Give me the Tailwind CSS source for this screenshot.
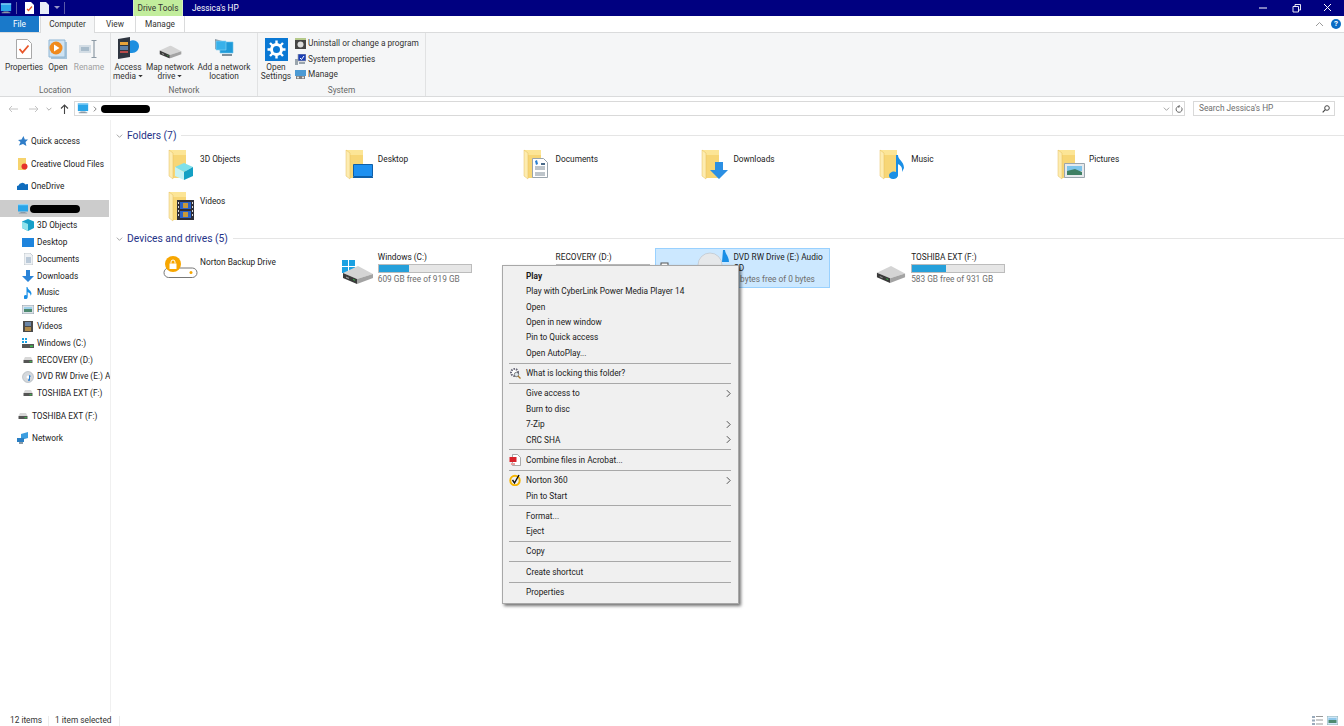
<!DOCTYPE html>
<html lang="en">
<head>
<meta charset="UTF-8">
<title>Jessica's HP</title>
<script src="https://cdn.jsdelivr.net/npm/@tailwindcss/browser@4"></script>
</head>
<body class="font-['Roboto',sans-serif] text-[8.300px] text-[#1a1a1a] bg-white">

<svg class="hidden" xmlns="http://www.w3.org/2000/svg">
  <symbol id="folder" viewBox="0 0 32 32">
    <path d="M1 1h17v25H1z" fill="#fce596"/>
    <path d="M5 6h13v23H5z" fill="#f7d676"/>
    <path d="M1 1l4 3v26l-4-3z" fill="#fdecb0" stroke="#e5bf5c" stroke-width=".5"/>
  </symbol>
  <symbol id="pc" viewBox="0 0 14 12">
    <path d="M1 0h12v9H1z" fill="#2aa5e8"/>
    <path d="M1 0h12v1.500H1z" fill="#8fd3f7"/>
    <path d="M4 9.500h6v1H4zM2 10.500h10v1H2z" fill="#8a9aa6"/>
  </symbol>
  <symbol id="hdd" viewBox="0 0 12 8">
    <path d="M2 0h8l2 4H0z" fill="#d8d8d8"/>
    <path d="M0 4h12v4H0z" fill="#555"/>
    <path d="M8 5.500h3v1.500H8z" fill="#3fbf4f"/>
  </symbol>
  <symbol id="bigdrive" viewBox="0 0 32 18">
    <path d="M1 7L16 0l15 8-16 5z" fill="#d4d4d4"/>
    <path d="M1 7l14 6v5L1 12z" fill="#3a3a3a"/>
    <path d="M15 13l16-5v4l-16 6z" fill="#a3a3a3"/>
    <path d="M4 10.500l3 1.300v1.200l-3-1.300z" fill="#9a9a9a"/>
    <path d="M11 13l2 .8v1l-2-.8z" fill="#39b54a"/>
  </symbol>
  <symbol id="chev" viewBox="0 0 6 10">
    <path d="M1 1l4 4-4 4" fill="none" stroke="#444" stroke-width="1.100"/>
  </symbol>
  <symbol id="down" viewBox="0 0 10 6">
    <path d="M1 1l4 4 4-4" fill="none" stroke="#777" stroke-width="1"/>
  </symbol>
  <symbol id="caret" viewBox="0 0 6 4">
    <path d="M0 0h6L3 3z" fill="#333"/>
  </symbol>
</svg>

<div class="flex flex-col h-[726px] w-[1344px] overflow-hidden">

  <!-- title bar -->
  <div class="flex items-center h-4 shrink-0 bg-[#000080] text-white">
    <svg class="w-3 h-[11px] ml-0 shrink-0"><use href="#pc"/></svg>
    <div class="w-px h-3 bg-[#5a5aa8] ml-1"></div>
    <svg class="w-[9px] h-3 ml-2 shrink-0" viewBox="0 0 9 12"><path d="M0 0h6l3 3v9H0z" fill="#fff"/><path d="M2 7l1.500 1.500L7 4.500" fill="none" stroke="#e8562a" stroke-width="1.200"/></svg>
    <svg class="w-[9px] h-3 ml-[6px] shrink-0" viewBox="0 0 9 12"><path d="M0 0h6l3 3v9H0z" fill="#e8eef8"/></svg>
    <svg class="w-[6px] h-1 ml-[5px]" viewBox="0 0 6 4"><path d="M0 0h6L3 3z" fill="#9a9ac8"/></svg>
    <div class="w-px h-3 bg-[#5a5aa8] ml-1"></div>
    <div class="flex items-center justify-center w-[50px] h-4 ml-[68px] bg-[#c2ed9c] text-[#333] border-x border-[#d8f0c0]">Drive Tools</div>
    <span class="ml-[9px]">Jessica's HP</span>
    <div class="flex items-center ml-auto">
      <svg class="w-[34px] h-4" viewBox="0 0 34 16"><path d="M12 8h8" stroke="#fff"/></svg>
      <svg class="w-[30px] h-4" viewBox="0 0 30 16"><path d="M12 6.500h5.500V12H12zM14 6.500V4.500h5.500V10h-2" fill="none" stroke="#fff" stroke-width=".9"/></svg>
      <svg class="w-[33px] h-4" viewBox="0 0 33 16"><path d="M13 4l7 7M20 4l-7 7" stroke="#fff"/></svg>
    </div>
  </div>

  <!-- tabs -->
  <div class="flex h-[17px] shrink-0 border-b border-[#dadbdc] text-[#333]">
    <div class="flex items-center justify-center w-[39px] h-4 bg-[#1979ca] text-white">File</div>
    <div class="flex items-center justify-center w-[55px] h-[17px] ml-px bg-[#f5f6f7] border-x border-[#dadbdc]">Computer</div>
    <div class="flex items-center justify-center w-10 h-4">View</div>
    <div class="flex items-center justify-center w-[50px] h-4 border-x border-[#dadbdc]">Manage</div>
    <svg class="w-[9px] h-[6px] mt-[5px] ml-auto" viewBox="0 0 9 6"><path d="M1 5l3.500-3.500L8 5" fill="none" stroke="#9a9a9a"/></svg>
    <div class="flex items-center justify-center w-[10px] h-[10px] mt-[3px] ml-[7px] mr-[3px] rounded-full bg-[#0a6cc4] text-white text-[8px] font-bold">?</div>
  </div>

  <!-- ribbon -->
  <div class="flex h-16 shrink-0 bg-[#f5f6f7] border-b border-[#dadbdc] text-[#333] whitespace-nowrap">
    <div class="flex flex-col w-[111px] border-r border-[#e1e2e3]">
      <div class="flex flex-1 pl-[5px] pt-[6px] leading-[9px] text-center">
        <div class="flex flex-col items-center w-[38px]">
          <svg class="w-4 h-5" viewBox="0 0 16 20"><path d="M.5.500h11l4 4v15H.5z" fill="#fff" stroke="#a8a8a8"/><path d="M3.500 10l3 3.500 6-7" fill="none" stroke="#e8562a" stroke-width="1.800"/></svg>
          <span class="mt-[4px]">Properties</span>
        </div>
        <div class="flex flex-col items-center w-[30px]">
          <svg class="w-5 h-5" viewBox="0 0 20 20"><path d="M3 3h16v17H3z" fill="#a7c4da"/><path d="M1 1h16v17H1z" fill="#cfe3f2" stroke="#8fb6d4"/><circle cx="8" cy="9" r="6.500" fill="#f08a1d"/><path d="M6 5.500v7l5.500-3.500z" fill="#fff"/></svg>
          <span class="mt-[4px]">Open</span>
        </div>
        <div class="flex flex-col items-center w-8 text-[#a0a0a0]">
          <svg class="w-5 h-5" viewBox="0 0 20 20"><path d="M0 6h12v8H0z" fill="#d3dde5"/><path d="M2 8h8v4H2z" fill="#a9bccb"/><path d="M15 2v16M12.500 1.500h5M12.500 18.500h5" stroke="#8d9aa5" stroke-width="1.200" fill="none"/></svg>
          <span class="mt-[4px]">Rename</span>
        </div>
      </div>
      <div class="flex items-center justify-center h-3 text-[#666]">Location</div>
    </div>

    <div class="flex flex-col w-[147px] border-r border-[#e1e2e3]">
      <div class="flex flex-1 pl-[3px] pt-[4px] leading-[9px] text-center">
        <div class="flex flex-col items-center w-7">
          <svg class="w-[23px] h-[22px]" viewBox="0 0 23 22"><path d="M1 2l12-2v20L1 22z" fill="#2f3540"/><path d="M3 5h8v3H3z" fill="#e8a33a"/><path d="M3 9h8v4H3z" fill="#5c7fa8"/><path d="M3 14h8v2H3z" fill="#b84a4a"/><path d="M13 4a6 6 0 0 1 9 5c0 4-3 7-7 7h-2z" fill="#1d8fe0"/></svg>
          <span class="mt-[4px]">Access<br>media <svg class="inline w-[5px] h-[3px] align-middle"><use href="#caret"/></svg></span>
        </div>
        <div class="flex flex-col items-center w-[50px] ml-[3px]">
          <svg class="w-[23px] h-[14px] mt-2" viewBox="0 0 32 18"><use href="#bigdrive" width="32" height="18"/></svg>
          <span class="mt-[4px]">Map network<br>drive <svg class="inline w-[5px] h-[3px] align-middle"><use href="#caret"/></svg></span>
        </div>
        <div class="flex flex-col items-center w-[54px] ml-[2px]">
          <svg class="w-5 h-[22px]" viewBox="0 0 20 22"><path d="M1 2l11 3v10L1 12z" fill="#8a9aa6"/><path d="M6 5h13v11H6z" fill="#1f9bd9" stroke="#6cc2ea" stroke-width=".6"/><path d="M2 4h10v9H2z" fill="#38b1ea" stroke="#8ed4f4" stroke-width=".6"/><path d="M8 17h10v2H8z" fill="#7f8f9a"/></svg>
          <span class="mt-[4px]">Add a network<br>location</span>
        </div>
      </div>
      <div class="flex items-center justify-center h-3 text-[#666]">Network</div>
    </div>

    <div class="flex flex-col w-[168px] border-r border-[#e1e2e3]">
      <div class="flex flex-1 pl-[4px] pt-[5px] leading-[9px]">
        <div class="flex flex-col items-center w-7 text-center">
          <svg class="w-[23px] h-[23px]" viewBox="0 0 23 23"><path d="M0 0h23v23H0z" fill="#0a78d4"/><circle cx="11.500" cy="11.500" r="5" fill="none" stroke="#fff" stroke-width="3"/><path d="M11.500 2.500v4M11.500 16.500v4M2.500 11.500h4M16.500 11.500h4M5 5l3 3M15 15l3 3M18 5l-3 3M8 15l-3 3" stroke="#fff" stroke-width="2.400"/></svg>
          <span class="mt-[2px]">Open<br>Settings</span>
        </div>
        <div class="flex flex-col ml-[5px] -mt-[2px]">
          <div class="flex items-center h-[15.500px] gap-[2px]">
            <svg class="w-[11px] h-[11px]" viewBox="0 0 11 11"><path d="M0 1h11v10H0z" fill="#444"/><path d="M0 0h11v2H0z" fill="#b5c98a"/><circle cx="5.500" cy="6.500" r="3" fill="#ddd"/></svg>
            <span>Uninstall or change a program</span>
          </div>
          <div class="flex items-center h-[15.500px] gap-[2px]">
            <svg class="w-[11px] h-[11px]" viewBox="0 0 11 11"><path d="M3 0h8v7H3z" fill="#1c3fb5" stroke="#aaa" stroke-width=".7"/><path d="M5 4l1.500 1.500L9 2" fill="none" stroke="#fff"/><path d="M0 5h3v6H0zM4 8h6v2H4z" fill="#9aa5ad"/></svg>
            <span>System properties</span>
          </div>
          <div class="flex items-center h-[15.500px] gap-[2px]">
            <svg class="w-[11px] h-[11px]" viewBox="0 0 11 11"><path d="M0 1h11v6H0z" fill="#4b9ad4"/><path d="M1 7h9v3H1z" fill="#7d7d7d"/><circle cx="3" cy="8.500" r="1" fill="#eee"/><circle cx="8" cy="8.500" r="1" fill="#eee"/></svg>
            <span>Manage</span>
          </div>
        </div>
      </div>
      <div class="flex items-center justify-center h-3 text-[#666]">System</div>
    </div>
  </div>

  <!-- address bar -->
  <div class="flex items-center h-[23px] shrink-0">
    <svg class="w-[10px] h-2 ml-2" viewBox="0 0 10 8"><path d="M10 4H1M4 1L1 4l3 3" fill="none" stroke="#c4c4c4"/></svg>
    <svg class="w-[10px] h-2 ml-[11px]" viewBox="0 0 10 8"><path d="M0 4h9M6 1l3 3-3 3" fill="none" stroke="#c4c4c4"/></svg>
    <svg class="w-[6px] h-1 ml-[7px]"><use href="#down"/></svg>
    <svg class="w-[9px] h-[10px] ml-[8px]" viewBox="0 0 9 10"><path d="M4.500 10V1M1 4.500L4.500 1 8 4.500" fill="none" stroke="#444" stroke-width="1.100"/></svg>
    <div class="flex items-center flex-1 h-[15px] ml-[5px] border border-[#d9d9d9]">
      <svg class="w-3 h-[11px] ml-[2px]"><use href="#pc"/></svg>
      <svg class="w-1 h-[6px] ml-[4px]"><use href="#chev"/></svg>
      <div class="w-[49px] h-2 ml-[4px] rounded-full bg-black"></div>
      <svg class="w-[7px] h-1 ml-auto mr-[2px]"><use href="#down"/></svg>
      <div class="flex items-center justify-center w-3 h-[13px] border-l border-[#d9d9d9]">
        <svg class="w-2 h-2" viewBox="0 0 8 8"><path d="M6.500 2.500a3 3 0 1 1-2.500-1.200M3.500 0l1.500 1.300L3.500 2.800" fill="none" stroke="#555" stroke-width=".9"/></svg>
      </div>
    </div>
    <div class="flex items-center w-[142px] h-[15px] ml-2 mr-[9px] pl-[5px] border border-[#d9d9d9] text-[#6d6d6d]">
      <span>Search Jessica's HP</span>
      <svg class="w-2 h-2 ml-auto mr-[4px]" viewBox="0 0 8 8"><circle cx="5" cy="3" r="2.300" fill="none" stroke="#444"/><path d="M3.300 4.700L.7 7.300" stroke="#444" stroke-width="1.200"/></svg>
    </div>
  </div>

  <!-- body -->
  <div class="flex flex-1 min-h-0">
    <aside class="w-[111px] shrink-0 border-r border-[#f0f0f0] pt-[13px] overflow-hidden whitespace-nowrap">
      <div class="flex items-center h-[16.800px] pl-[18px] gap-[3px]">
        <svg class="w-[10px] h-[10px] shrink-0" viewBox="0 0 10 10"><path d="M5.500 0l1.300 3.400L10 3.600 7.500 6l.9 4-3.400-2L1 9.500 2.500 6 0 4l3.500-.5z" fill="#2f7dc8"/></svg>
        <span>Quick access</span>
      </div>
      <div class="flex items-center h-[16.800px] mt-[5.600px] pl-[18px] gap-[3px]">
        <svg class="w-[10px] h-3 shrink-0" viewBox="0 0 10 12"><path d="M0 0h8v12H0z" fill="#f6d36d"/><circle cx="6.500" cy="8.500" r="3" fill="#e5322b"/></svg>
        <span>Creative Cloud Files</span>
      </div>
      <div class="flex items-center h-[16.800px] mt-[5.600px] pl-[17px] gap-[3px]">
        <svg class="w-[11px] h-2 shrink-0" viewBox="0 0 11 8"><path d="M0 8a2.500 2.500 0 0 1 1.500-4.500 4 4 0 0 1 7-1A3 3 0 0 1 11 8z" fill="#0f6cbd"/></svg>
        <span>OneDrive</span>
      </div>
      <div class="flex items-center h-[16.800px] mt-[5.600px] w-[109px] pl-[17px] bg-[#cccccc]">
        <svg class="w-3 h-[10px] shrink-0"><use href="#pc"/></svg>
        <div class="w-[50px] h-2 ml-[1px] rounded-full bg-black"></div>
      </div>
      <div class="flex items-center h-[16.800px] pl-[22px] gap-[3px]">
        <svg class="w-3 h-3 shrink-0" viewBox="0 0 12 12"><path d="M6 0l6 2.500V9l-6 3-6-3V2.500z" fill="#18a0c8"/><path d="M0 2.500L6 5v7L0 9z" fill="#8fe3ec"/></svg>
        <span>3D Objects</span>
      </div>
      <div class="flex items-center h-[16.800px] pl-[22px] gap-[3px]">
        <svg class="w-3 h-[9px] shrink-0" viewBox="0 0 12 9"><path d="M0 0h12v9H0z" fill="#1e84dd"/></svg>
        <span>Desktop</span>
      </div>
      <div class="flex items-center h-[16.800px] pl-[24px] gap-[4px]">
        <svg class="w-[9px] h-3 shrink-0" viewBox="0 0 9 12"><path d="M0 0h6l3 3v9H0z" fill="#eef1f4" stroke="#a9b2ba" stroke-width=".6"/><path d="M2 5h5M2 7h5M2 9h5" stroke="#6d8fb0" stroke-width=".8"/></svg>
        <span>Documents</span>
      </div>
      <div class="flex items-center h-[16.800px] pl-[22px] gap-[3px]">
        <svg class="w-3 h-3 shrink-0" viewBox="0 0 12 12"><path d="M4 0h4v6h4l-6 6-6-6h4z" fill="#2b84d8"/></svg>
        <span>Downloads</span>
      </div>
      <div class="flex items-center h-[16.800px] pl-[24px] gap-[5px]">
        <svg class="w-2 h-3 shrink-0" viewBox="0 0 8 12"><path d="M2.500 0h1c0 3 4 3 4 7l-1 2c.4-3-2-3.500-2.800-4v5a2 2 0 1 1-1.200-1.800z" fill="#1a8fe6"/></svg>
        <span>Music</span>
      </div>
      <div class="flex items-center h-[16.800px] pl-[22px] gap-[3px]">
        <svg class="w-3 h-[9px] shrink-0" viewBox="0 0 12 9"><path d="M0 0h12v9H0z" fill="#dbe2e8" stroke="#8c98a2" stroke-width=".8"/><path d="M2 2h8v2H2z" fill="#9ed0ea"/><path d="M2 4h8v3H2z" fill="#4d8a70"/></svg>
        <span>Pictures</span>
      </div>
      <div class="flex items-center h-[16.800px] pl-[23px] gap-[4px]">
        <svg class="w-[10px] h-[11px] shrink-0" viewBox="0 0 10 11"><path d="M0 0h10v11H0z" fill="#4a4a4a"/><path d="M2 1h6v4H2z" fill="#6a86a8"/><path d="M2 6h6v4H2z" fill="#b08a4a"/></svg>
        <span>Videos</span>
      </div>
      <div class="flex items-center h-[16.800px] pl-[22px] gap-[3px]">
        <svg class="w-3 h-[10px] shrink-0" viewBox="0 0 12 10"><path d="M0 0h2v2H0zM3 0h2v2H3zM0 3h2v2H0zM3 3h2v2H3z" fill="#1ba1e2"/><path d="M0 6h12v4H0z" fill="#555"/><path d="M8 7.500h3V9H8z" fill="#3fbf4f"/></svg>
        <span>Windows (C:)</span>
      </div>
      <div class="flex items-center h-[16.800px] pl-[23px] gap-[4px]">
        <svg class="w-[10px] h-[6px] shrink-0"><use href="#hdd"/></svg>
        <span>RECOVERY (D:)</span>
      </div>
      <div class="flex items-center h-[16.800px] pl-[22px] gap-[3px]">
        <svg class="w-3 h-3 shrink-0" viewBox="0 0 12 12"><circle cx="6" cy="6" r="5.500" fill="#d4d8dc" stroke="#9aa2a8" stroke-width=".5"/><circle cx="6" cy="6" r="1.500" fill="#fff"/><path d="M7 9V4l2 1-1 1v3a1 1 0 1 1-1-1z" fill="#2a7fd0"/></svg>
        <span>DVD RW Drive (E:) Audio CD</span>
      </div>
      <div class="flex items-center h-[16.800px] pl-[23px] gap-[4px]">
        <svg class="w-[10px] h-[6px] shrink-0"><use href="#hdd"/></svg>
        <span>TOSHIBA EXT (F:)</span>
      </div>
      <div class="flex items-center h-[16.800px] mt-[5.600px] pl-[18px] gap-[4px]">
        <svg class="w-[10px] h-[6px] shrink-0"><use href="#hdd"/></svg>
        <span>TOSHIBA EXT (F:)</span>
      </div>
      <div class="flex items-center h-[16.800px] mt-[5.600px] pl-[17px] gap-[3px]">
        <svg class="w-3 h-3 shrink-0" viewBox="0 0 12 12"><path d="M4 2l7-2v6l-7 2z" fill="#3c9ee0"/><path d="M0 6h7v4H0z" fill="#2a7fc4"/><path d="M2 10h4v2H2z" fill="#8a9aa6"/></svg>
        <span>Network</span>
      </div>
    </aside>

    <main class="relative flex-1 pt-[9px] pl-[5px]">
      <!-- Folders -->
      <div class="flex items-center h-[14px]">
        <svg class="w-[7px] h-1"><use href="#down"/></svg>
        <span class="ml-1 text-[10.300px] text-[#1e3287]">Folders (7)</span>
        <div class="flex-1 h-px ml-[5px] mb-[2px] bg-[#e5e5e5]"></div>
      </div>
      <div class="grid grid-cols-[repeat(6,177.800px)] auto-rows-[40px] gap-y-[2px] ml-[5.600px] mt-[5px]">
        <div class="flex h-10">
          <div class="w-[78.400px] shrink-0">
            <svg class="w-8 h-8 ml-[46px] mt-px" viewBox="0 0 32 32"><use href="#folder" width="32" height="32"/><path d="M7 18l9-4 9 4-9 5z" fill="#7fe0ea"/><path d="M7 18l9 5v8l-9-4z" fill="#c5f2f4"/><path d="M16 23l9-5v9l-9 4z" fill="#14a0c4"/></svg>
          </div>
          <span class="mt-[4.500px]">3D Objects</span>
        </div>
        <div class="flex h-10">
          <div class="w-[78.400px] shrink-0">
            <svg class="w-8 h-8 ml-[46px] mt-px" viewBox="0 0 32 32"><use href="#folder" width="32" height="32"/><path d="M8.500 15.500h19v12h-19z" fill="#1e90f0" stroke="#0f5fa8"/><path d="M8 28h20v1H8z" fill="#0f5fa8"/></svg>
          </div>
          <span class="mt-[4.500px]">Desktop</span>
        </div>
        <div class="flex h-10">
          <div class="w-[78.400px] shrink-0">
            <svg class="w-8 h-8 ml-[46px] mt-px" viewBox="0 0 32 32"><use href="#folder" width="32" height="32"/><path d="M9.500 9.500h11l4 4v15h-15z" fill="#fff" stroke="#9aa5ad"/><path d="M12 12l2-1 1 4-2 1z" fill="#2a7fd0"/><path d="M12 18h10M12 20h10M12 24h10M12 26h10" stroke="#7d8a95"/><path d="M18 14h4v2h-4z" fill="#4b6b8a"/></svg>
          </div>
          <span class="mt-[4.500px]">Documents</span>
        </div>
        <div class="flex h-10">
          <div class="w-[78.400px] shrink-0">
            <svg class="w-8 h-8 ml-[46px] mt-px" viewBox="0 0 32 32"><use href="#folder" width="32" height="32"/><path d="M14 13h8v8h5l-9 9-9-9h5z" fill="#2b8fe3"/></svg>
          </div>
          <span class="mt-[4.500px]">Downloads</span>
        </div>
        <div class="flex h-10">
          <div class="w-[78.400px] shrink-0">
            <svg class="w-8 h-8 ml-[46px] mt-px" viewBox="0 0 32 32"><use href="#folder" width="32" height="32"/><path d="M17 6h2c0 5 6 6 6 13l-2 4c.8-6-2.500-7-4-8v11c0 2.500-2.500 4-5 4s-4-1.500-4-3.500 2.500-4 5-4c.8 0 1.500.2 2 .5z" fill="#1a8fe6"/></svg>
          </div>
          <span class="mt-[4.500px]">Music</span>
        </div>
        <div class="flex h-10">
          <div class="w-[78.400px] shrink-0">
            <svg class="w-8 h-8 ml-[46px] mt-px" viewBox="0 0 32 32"><use href="#folder" width="32" height="32"/><path d="M7.500 14.500h20v14h-20z" fill="#e6e9ec" stroke="#9aa5ad"/><path d="M10 17h15v5H10z" fill="#7ec4ea"/><path d="M10 22l8-2 7 3v3H10z" fill="#3e7f63"/></svg>
          </div>
          <span class="mt-[4.500px]">Pictures</span>
        </div>
        <div class="flex h-10">
          <div class="w-[78.400px] shrink-0">
            <svg class="w-8 h-8 ml-[46px] mt-px" viewBox="0 0 32 32"><use href="#folder" width="32" height="32"/><path d="M9 9h17v20H9z" fill="#2e2e38"/><path d="M12 11h11v7H12z" fill="#2a62c8"/><path d="M12 20h11v7H12z" fill="#2a62c8"/><path d="M15 12h5v5h-5zM15 21h5v5h-5z" fill="#c89a3a"/><path d="M10 11h1v2h-1zM10 15h1v2h-1zM10 19h1v2h-1zM10 23h1v2h-1zM24 11h1v2h-1zM24 15h1v2h-1zM24 19h1v2h-1zM24 23h1v2h-1z" fill="#ddd"/></svg>
          </div>
          <span class="mt-[4.500px]">Videos</span>
        </div>
      </div>

      <!-- Devices and drives -->
      <div class="flex items-center h-[14px] mt-[2px]">
        <svg class="w-[7px] h-1"><use href="#down"/></svg>
        <span class="ml-1 text-[10.300px] text-[#1e3287]">Devices and drives (5)</span>
        <div class="flex-1 h-px ml-[5px] mb-[2px] bg-[#e5e5e5]"></div>
      </div>
      <div class="grid grid-cols-[repeat(6,177.800px)] auto-rows-[40px] ml-[5.600px] mt-[2px]">
        <div class="flex h-10">
          <div class="w-[78.400px] shrink-0">
            <svg class="w-9 h-[23px] ml-[41px] mt-2" viewBox="0 0 36 23"><rect x="1" y="12" width="33" height="9.500" rx="4.700" fill="#fff" stroke="#777"/><circle cx="10" cy="8" r="8" fill="#f7a600"/><path d="M6.500 7.500h7V13h-7z" fill="#fff"/><path d="M8 7.500V6a2 2 0 0 1 4 0v1.500" fill="none" stroke="#fff"/><circle cx="28" cy="16.500" r="1.500" fill="#f7a600"/></svg>
          </div>
          <span class="mt-[8px]">Norton Backup Drive</span>
        </div>
        <div class="flex h-10">
          <div class="w-[78.400px] shrink-0">
            <svg class="w-8 h-[24px] ml-[43px] mt-[12px]" viewBox="0 0 32 24"><path d="M0 0h6v6H0zM7 0h6v6H7zM0 7h6v6H0zM7 7h6v6H7z" fill="#1ba1e2"/><svg x="0" y="6" width="32" height="18" viewBox="0 0 32 18"><use href="#bigdrive" width="32" height="18"/></svg></svg>
          </div>
          <div class="flex flex-col">
            <span class="leading-[12px] mt-[3px]">Windows (C:)</span>
            <div class="w-[94px] h-[9px] mt-px bg-[#e6e6e6] border border-[#bcbcbc]"><div class="h-full bg-[#26a0da]" style="width:33%"></div></div>
            <span class="leading-[12px] text-[#6d6d6d]">609 GB free of 919 GB</span>
          </div>
        </div>
        <div class="flex h-10">
          <div class="w-[78.400px] shrink-0"></div>
          <div class="flex flex-col">
            <span class="leading-[12px] mt-[3px]">RECOVERY (D:)</span>
            <div class="w-[94px] h-[9px] mt-px bg-[#e6e6e6] border border-[#bcbcbc]"><div class="h-full bg-[#26a0da]" style="width:90%"></div></div>
          </div>
        </div>
        <div class="flex w-[175px] h-10 bg-[#cce8ff] border border-[#99d1ff]">
          <div class="w-[77.400px] shrink-0">
            <svg class="w-[74px] h-[20px]" viewBox="0 0 74 20"><rect x="5" y="14" width="7" height="6" fill="#fff" stroke="#555"/><circle cx="54" cy="16" r="12" fill="#e6e8ea" stroke="#b8bec4" stroke-width=".6"/><path d="M67 1h2c0 4 4 6 4 12h-7z" fill="#1a8fe6"/></svg>
          </div>
          <div class="flex flex-col">
            <span class="leading-[10.500px] mt-[3px] w-[93px]">DVD RW Drive (E:) Audio CD</span>
            <span class="leading-[12px] text-[#6d6d6d]">0 bytes free of 0 bytes</span>
          </div>
        </div>
        <div class="flex h-10">
          <div class="w-[78.400px] shrink-0">
            <svg class="w-[30px] h-[17px] ml-[43px] mt-[18px]" viewBox="0 0 32 18"><use href="#bigdrive" width="32" height="18"/></svg>
          </div>
          <div class="flex flex-col">
            <span class="leading-[12px] mt-[3px]">TOSHIBA EXT (F:)</span>
            <div class="w-[94px] h-[9px] mt-px bg-[#e6e6e6] border border-[#bcbcbc]"><div class="h-full bg-[#26a0da]" style="width:37%"></div></div>
            <span class="leading-[12px] text-[#6d6d6d]">583 GB free of 931 GB</span>
          </div>
        </div>
      </div>

      <!-- context menu -->
      <div class="absolute left-[391px] top-[145px] flex flex-col w-[237px] h-[339px] pt-[2.400px] bg-[#f0f0f0] border border-[#a8a8a8] shadow-[2px_2px_3px_rgba(0,0,0,0.55)]">
        <div class="flex items-center h-[15.400px] pl-[23px] font-bold">Play</div>
        <div class="flex items-center h-[15.400px] pl-[23px]">Play with CyberLink Power Media Player 14</div>
        <div class="flex items-center h-[15.400px] pl-[23px]">Open</div>
        <div class="flex items-center h-[15.400px] pl-[23px]">Open in new window</div>
        <div class="flex items-center h-[15.400px] pl-[23px]">Pin to Quick access</div>
        <div class="flex items-center h-[15.400px] pl-[23px]">Open AutoPlay...</div>
        <div class="flex items-center h-[4.900px] ml-[6px] mr-[7px]"><div class="w-full h-px bg-[#a8a8a8]"></div></div>
        <div class="flex items-center h-[15.400px] pl-[6px]">
          <svg class="w-3 h-3 mr-[5px]" viewBox="0 0 12 12"><circle cx="5.500" cy="5.500" r="3.500" fill="#fff" stroke="#667" stroke-width="2" stroke-dasharray="1.500 1"/><circle cx="7.500" cy="7.500" r="2.200" fill="#dfe8ee" stroke="#555" stroke-width=".7"/><path d="M9 9l2.500 2.500" stroke="#a8792a" stroke-width="1.200"/></svg>
          <span>What is locking this folder?</span>
        </div>
        <div class="flex items-center h-[4.900px] ml-[6px] mr-[7px]"><div class="w-full h-px bg-[#a8a8a8]"></div></div>
        <div class="flex items-center h-[15.400px] pl-[23px]">Give access to<svg class="w-[5px] h-[9px] ml-auto mr-[7px]"><use href="#chev"/></svg></div>
        <div class="flex items-center h-[15.400px] pl-[23px]">Burn to disc</div>
        <div class="flex items-center h-[15.400px] pl-[23px]">7-Zip<svg class="w-[5px] h-[9px] ml-auto mr-[7px]"><use href="#chev"/></svg></div>
        <div class="flex items-center h-[15.400px] pl-[23px]">CRC SHA<svg class="w-[5px] h-[9px] ml-auto mr-[7px]"><use href="#chev"/></svg></div>
        <div class="flex items-center h-[4.900px] ml-[6px] mr-[7px]"><div class="w-full h-px bg-[#a8a8a8]"></div></div>
        <div class="flex items-center h-[15.400px] pl-[6px]">
          <svg class="w-3 h-3 mr-[5px]" viewBox="0 0 12 12"><path d="M3.500.500h5l3 3v8h-8z" fill="#fff" stroke="#888" stroke-width=".7"/><path d="M.5 3h7v5h-7z" fill="#d8232a"/><path d="M2 9h4v2H2z" fill="#e8a0a0"/></svg>
          <span>Combine files in Acrobat...</span>
        </div>
        <div class="flex items-center h-[4.900px] ml-[6px] mr-[7px]"><div class="w-full h-px bg-[#a8a8a8]"></div></div>
        <div class="flex items-center h-[15.400px] pl-[6px]">
          <svg class="w-3 h-3 mr-[5px]" viewBox="0 0 12 12"><circle cx="6" cy="6.500" r="4.700" fill="none" stroke="#f7b500" stroke-width="2"/><path d="M3.500 6l2 3L10 1" fill="none" stroke="#111" stroke-width="1.400"/></svg>
          <span>Norton 360</span>
          <svg class="w-[5px] h-[9px] ml-auto mr-[7px]"><use href="#chev"/></svg>
        </div>
        <div class="flex items-center h-[15.400px] pl-[23px]">Pin to Start</div>
        <div class="flex items-center h-[4.900px] ml-[6px] mr-[7px]"><div class="w-full h-px bg-[#a8a8a8]"></div></div>
        <div class="flex items-center h-[15.400px] pl-[23px]">Format...</div>
        <div class="flex items-center h-[15.400px] pl-[23px]">Eject</div>
        <div class="flex items-center h-[4.900px] ml-[6px] mr-[7px]"><div class="w-full h-px bg-[#a8a8a8]"></div></div>
        <div class="flex items-center h-[15.400px] pl-[23px]">Copy</div>
        <div class="flex items-center h-[4.900px] ml-[6px] mr-[7px]"><div class="w-full h-px bg-[#a8a8a8]"></div></div>
        <div class="flex items-center h-[15.400px] pl-[23px]">Create shortcut</div>
        <div class="flex items-center h-[4.900px] ml-[6px] mr-[7px]"><div class="w-full h-px bg-[#a8a8a8]"></div></div>
        <div class="flex items-center h-[15.400px] pl-[23px]">Properties</div>
      </div>
    </main>
  </div>

  <!-- status bar -->
  <div class="flex items-center h-[14px] shrink-0 pl-[10px] pt-[3px] text-[#333]">
    <span>12 items</span>
    <div class="w-px h-[10px] ml-[6px] bg-[#ececec]"></div>
    <span class="ml-[6px]">1 item selected</span>
    <div class="w-px h-[10px] ml-[7px] bg-[#ececec]"></div>
    <svg class="w-[11px] h-[9px] ml-auto" viewBox="0 0 11 9"><path d="M0 0h3v2H0zM0 3.500h3v2H0zM0 7h3v2H0z" fill="#9ab"/><path d="M4 .5h7M4 4h7M4 8h7" stroke="#999"/></svg>
    <svg class="w-[11px] h-[9px] ml-[4px] mr-[6px]" viewBox="0 0 11 9"><path d="M0 0h11v9H0z" fill="#cfe6f7" stroke="#8aa" stroke-width=".8"/><path d="M1.500 2h8v2h-8z" fill="#8ec8ea"/><path d="M1.500 4h8v3h-8z" fill="#4d8a70"/></svg>
  </div>
</div>

</body>
</html>
